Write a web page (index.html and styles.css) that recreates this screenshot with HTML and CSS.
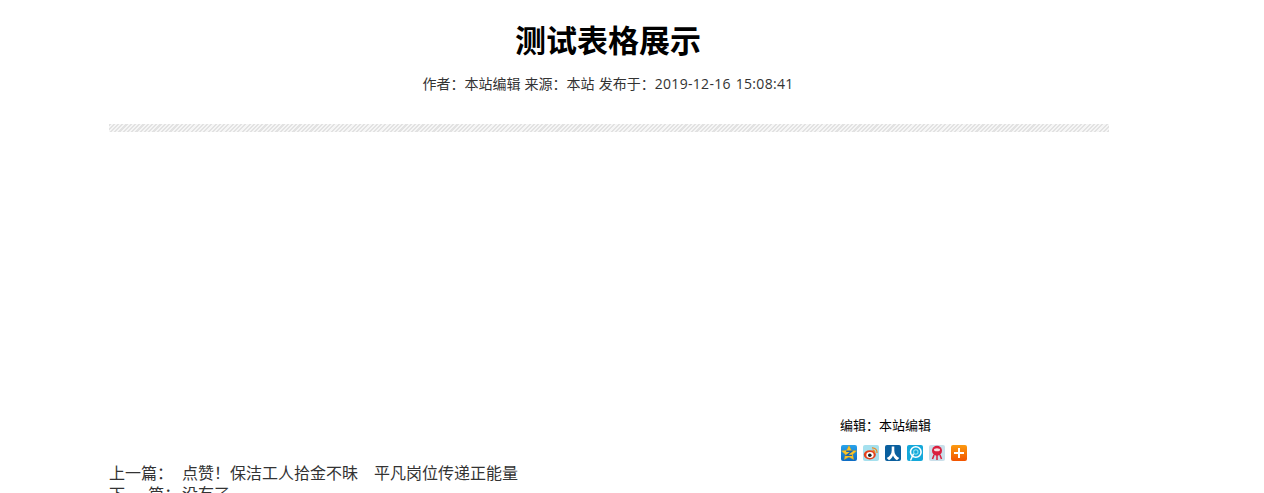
FILE: index.html
```html
<!DOCTYPE html>
<html lang="zh-CN">
<head>
    <meta charset="UTF-8">
    <title>测试表格展示</title>
    <link rel="stylesheet" href="styles.css">
</head>
<body>
    <div class="article">
        <h1 class="title">测试表格展示</h1>
        <p class="meta">作者：本站编辑 来源：本站 发布于：<span class="date">2019-12-16 15:08:41</span></p>
        <div class="hatch"></div>
        <div class="content"></div>

        <div class="share-box">
            <p class="editor">编辑：本站编辑</p>
            <div class="share">
                <!-- QQ空间 -->
                <svg class="icon" viewBox="0 0 16 16">
                    <defs>
                        <linearGradient id="qz" x1="0" y1="0" x2="0" y2="1"><stop offset="0" stop-color="#2aa3ea"/><stop offset="1" stop-color="#0d6cc4"/></linearGradient>
                        <linearGradient id="more" x1="0" y1="0" x2="0" y2="1"><stop offset="0" stop-color="#fb9a10"/><stop offset="1" stop-color="#f25400"/></linearGradient>
                    </defs>
                    <rect width="16" height="16" rx="2" fill="url(#qz)"/>
                    <path d="M8 .5l2.300 4.700 5.200.7-3.800 3.500 1 5.100L8 12l-4.700 2.500 1-5.100L.5 5.900l5.200-.7z" fill="#fbc525" stroke="#e59a12" stroke-width=".4"/>
                    <path d="M5.200 6.200h5.600L5.600 10.400h5.400" fill="none" stroke="#1b62ad" stroke-width="1.400"/>
                </svg>
                <!-- 新浪微博 -->
                <svg class="icon" viewBox="0 0 16 16">
                    <rect width="16" height="16" rx="2" fill="#a5e0ee"/>
                    <ellipse cx="6.800" cy="9.800" rx="6" ry="4.600" fill="#e5401c"/>
                    <ellipse cx="7" cy="10" rx="3.700" ry="2.900" fill="#fff"/>
                    <circle cx="6.800" cy="10.200" r="1.800" fill="#222"/>
                    <path d="M9 2.800a4.600 4.600 0 0 1 5 5.200M9.500 5.200a2.300 2.300 0 0 1 2.300 2.600" fill="none" stroke="#f0861a" stroke-width="1.200"/>
                </svg>
                <!-- 人人网 -->
                <svg class="icon" viewBox="0 0 16 16">
                    <rect width="16" height="16" rx="2" fill="#0a5f9e"/>
                    <path d="M6.700 1.500h2.600v4c0 3.500 2 6 5 7.500l-2.300 2.300C9.800 14 8.600 12.300 8 10.500 7.400 12.300 6.200 14 4 15.300L1.700 13c3-1.500 5-4 5-7.500z" fill="#fff"/>
                </svg>
                <!-- 腾讯朋友 -->
                <svg class="icon" viewBox="0 0 16 16">
                    <rect width="16" height="16" rx="2" fill="#14a8da"/>
                    <circle cx="8.800" cy="7" r="5.300" fill="none" stroke="#fff" stroke-width="1.600"/>
                    <circle cx="8.800" cy="7" r="2.200" fill="none" stroke="#8fe0f0" stroke-width="1.100"/>
                    <path d="M6.500 8.800L3.500 15.500" fill="none" stroke="#fff" stroke-width="1.500"/>
                </svg>
                <!-- 开心网 -->
                <svg class="icon" viewBox="0 0 16 16">
                    <rect width="16" height="16" rx="2" fill="#c9dfea"/>
                    <circle cx="8" cy="5.800" r="5" fill="#d91f3e"/>
                    <ellipse cx="8" cy="4.800" rx="3" ry="1.500" fill="#f8dde0"/>
                    <path d="M5 10l-1.500 4M8 10v5M11 10l1.500 4" fill="none" stroke="#d91f3e" stroke-width="1.500"/>
                </svg>
                <!-- 更多 -->
                <svg class="icon" viewBox="0 0 16 16">
                    <rect width="16" height="16" rx="2" fill="url(#more)"/>
                    <path d="M7 3h2v4h4v2H9v4H7V9H3V7h4z" fill="#fff"/>
                </svg>
            </div>
        </div>

        <div class="pager">
            <div class="pager-row"><span class="pager-label">上一篇：</span><a href="#">点赞！保洁工人拾金不昧　平凡岗位传递正能量</a></div>
            <div class="pager-row"><span class="pager-label">下 一 篇：</span><a href="#">没有了</a></div>
        </div>
    </div>
</body>
</html>
```

FILE: styles.css
```css
body {
    margin: 0;
    background: #fff;
    color: #333;
    font-family: "Noto Sans CJK SC", "Liberation Sans", sans-serif;
}

.article {
    width: 1000px;
    margin-left: 109px;
}

.title {
    margin: 0;
    padding: 19px 2px 0 0;
    font-size: 31px;
    line-height: 40px;
    font-weight: bold;
    color: #000;
    text-align: center;
}

.meta {
    margin: 13px 0 0;
    padding-right: 2px;
    font-size: 14px;
    line-height: 22px;
    text-align: center;
    word-spacing: 1px;
}

.date {
    font-family: "Open Sans", sans-serif;
    letter-spacing: 0.3px;
}

/* 斜纹分隔条 */
.hatch {
    height: 8px;
    margin-top: 29px;
    background: repeating-linear-gradient(135deg, #e2e2e2 0, #e2e2e2 1.5px, #f6f6f6 1.5px, #f6f6f6 3px);
}

.content {
    height: 282px;
}

.share-box {
    margin-left: 731px;
}

.editor {
    margin: 0;
    font-size: 13px;
    line-height: 22px;
    color: #000;
}

.share {
    display: flex;
    gap: 6px;
    margin-top: 9px;
    margin-left: 1px;
}

.icon {
    display: block;
    width: 16px;
    height: 16px;
}

.pager {
    margin-top: 1px;
    font-size: 16px;
    line-height: 21px;
}

.pager-row {
    display: flex;
}

.pager-label {
    width: 73px;
}

.pager a {
    color: #333;
    text-decoration: none;
}
```
